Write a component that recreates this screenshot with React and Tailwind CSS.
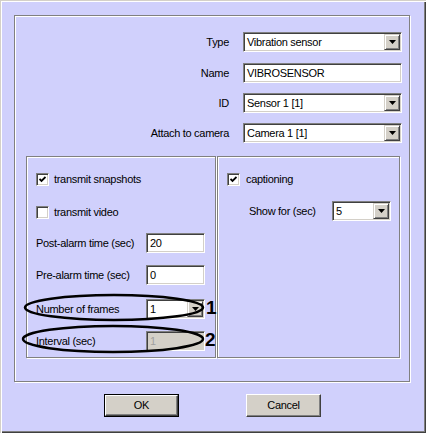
import React from 'react';

const sunken =
  'border border-t-[#808080] border-l-[#808080] border-b-white border-r-white shadow-[inset_1px_1px_0_#404040,inset_-1px_-1px_0_#d4d0c8]';

const groupBox = 'border border-[#808080] shadow-[inset_1px_1px_0_#fff,1px_1px_0_#fff]';

function DropButton() {
  return (
    <div className="w-[16px] h-[16px] shrink-0 bg-[#d4d0c8] border border-t-[#d4d0c8] border-l-[#d4d0c8] border-b-[#404040] border-r-[#404040] shadow-[inset_1px_1px_0_#fff,inset_-1px_-1px_0_#808080] flex items-center justify-center">
      <svg width="7" height="4" viewBox="0 0 7 4">
        <path d="M0 0h7L3.5 4z" fill="#000" />
      </svg>
    </div>
  );
}

function Select({ value, width }) {
  return (
    <div className={`${width} h-[20px] bg-white p-[1px] flex items-center ${sunken}`}>
      <span className="flex-1 pl-[2px]">{value}</span>
      <DropButton />
    </div>
  );
}

function TextBox({ value, width, disabled }) {
  return (
    <div
      className={`${width} h-[20px] flex items-center pl-[3px] ${sunken} ${
        disabled ? 'bg-[#d4d0c8] text-[#a0a0a0]' : 'bg-white'
      }`}
    >
      {value}
    </div>
  );
}

function CheckBox({ checked }) {
  return (
    <div className={`w-[13px] h-[13px] shrink-0 bg-white flex items-center justify-center ${sunken}`}>
      {checked && (
        <svg width="7" height="7" viewBox="0 0 7 7">
          <path d="M0.5 3l2 2L6.5 1" fill="none" stroke="#000" strokeWidth="1.8" />
        </svg>
      )}
    </div>
  );
}

function TopRow({ label, children, className = '' }) {
  return (
    <div className={`flex items-center h-[20px] ${className}`}>
      <span className="w-[214px] text-right">{label}</span>
      <div className="ml-[14px]">{children}</div>
    </div>
  );
}

function FieldRow({ label, children, className = '' }) {
  return (
    <div className={`flex items-center h-[20px] ${className}`}>
      <span className="w-[110px]">{label}</span>
      {children}
    </div>
  );
}

function Button({ children, isDefault }) {
  const face = (
    <div className="w-full h-full bg-[#d4d0c8] border border-t-white border-l-white border-b-[#404040] border-r-[#404040] shadow-[inset_-1px_-1px_0_#808080] flex items-center justify-center">
      {children}
    </div>
  );
  return (
    <div className={`w-[75px] h-[23px] ${isDefault ? 'border border-black' : ''}`}>{face}</div>
  );
}

export default function App() {
  return (
    <div className="relative w-[426px] h-[433px] bg-[#d0d0fc] pt-[15px] pl-[14px] text-[11px] leading-none tracking-[-0.3px] text-black font-['Liberation_Sans',Arial,sans-serif] shadow-[inset_1px_1px_0_#d4d0c8,inset_2px_2px_0_#fff,inset_-1px_-1px_0_#404040,inset_-2px_-2px_0_#808080]">
      <div className={`w-[396px] h-[367px] pt-[16px] ${groupBox}`}>
        <TopRow label="Type">
          <Select value="Vibration sensor" width="w-[159px]" />
        </TopRow>
        <TopRow label="Name" className="mt-[11px]">
          <TextBox value="VIBROSENSOR" width="w-[159px]" />
        </TopRow>
        <TopRow label="ID" className="mt-[10px]">
          <Select value="Sensor 1 [1]" width="w-[159px]" />
        </TopRow>
        <TopRow label="Attach to camera" className="mt-[10px]">
          <Select value="Camera 1 [1]" width="w-[159px]" />
        </TopRow>

        <div className="flex mt-[13px] pl-[11px]">
          {/* snapshots / video */}
          <div className={`w-[190px] h-[202px] pl-[9px] ${groupBox}`}>
            <div className="flex items-center h-[20px] mt-[12px]">
              <CheckBox checked />
              <span className="ml-[5px]">transmit snapshots</span>
            </div>
            <div className="flex items-center h-[20px] mt-[13px]">
              <CheckBox />
              <span className="ml-[5px]">transmit video</span>
            </div>
            <FieldRow label="Post-alarm time (sec)" className="mt-[11px]">
              <TextBox value="20" width="w-[59px]" />
            </FieldRow>
            <FieldRow label="Pre-alarm time (sec)" className="mt-[12px]">
              <TextBox value="0" width="w-[59px]" />
            </FieldRow>
            <FieldRow label="Number of frames" className="mt-[14px]">
              <Select value="1" width="w-[59px]" />
            </FieldRow>
            <FieldRow label="Interval (sec)" className="mt-[12px]">
              <TextBox value="1" width="w-[59px]" disabled />
            </FieldRow>
          </div>

          {/* captions */}
          <div className={`w-[183px] h-[202px] ml-[1px] pl-[9px] ${groupBox}`}>
            <div className="flex items-center h-[20px] mt-[12px]">
              <CheckBox checked />
              <span className="ml-[6px]">captioning</span>
            </div>
            <div className="flex items-center h-[20px] mt-[12px] ml-[22px]">
              <span className="w-[83px]">Show for (sec)</span>
              <Select value="5" width="w-[59px]" />
            </div>
          </div>
        </div>
      </div>

      <div className="flex mt-[12px] ml-[90px] gap-[67px]">
        <Button isDefault>OK</Button>
        <Button>Cancel</Button>
      </div>

      {/* callout marks */}
      <svg className="absolute left-0 top-0 pointer-events-none" width="426" height="433">
        <ellipse cx="114" cy="307.5" rx="89" ry="12.5" fill="none" stroke="#000" strokeWidth="2.5" />
        <ellipse cx="113" cy="339" rx="90" ry="13" fill="none" stroke="#000" strokeWidth="2.5" />
      </svg>
      <span className="absolute left-[206px] top-[298px] text-[19px] leading-none font-bold tracking-normal">1</span>
      <span className="absolute left-[205px] top-[330px] text-[19px] leading-none font-bold tracking-normal">2</span>
    </div>
  );
}
